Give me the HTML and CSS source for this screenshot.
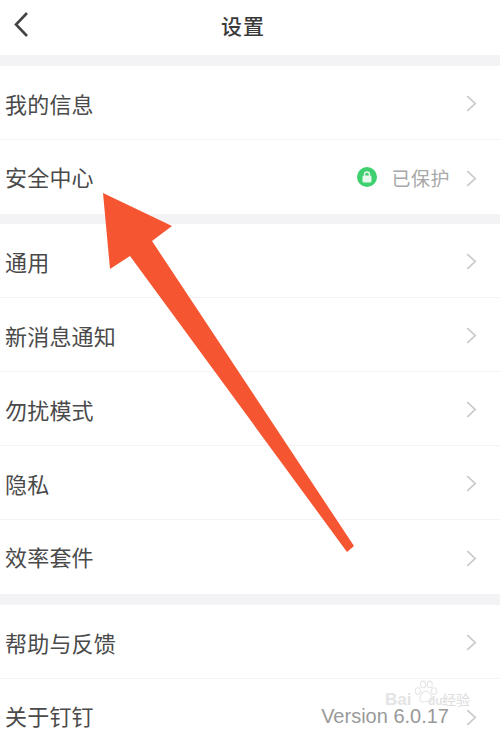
FILE: index.html
```html
<!DOCTYPE html>
<html>
<head>
<meta charset="utf-8">
<link rel="stylesheet" href="styles.css">
<title>设置</title>
</head>
<body>
	<div class="page">
		<div class="header">
			<svg class="back" width="16" height="28" viewBox="0 0 16 28"><path d="M14 2 L3 13.5 L14 25" /></svg>
			<div class="title">设置</div>
		</div>
		<div class="gap"></div>
		<div class="row line"><span class="name">我的信息</span><svg class="chev" width="11" height="17" viewBox="0 0 10 16"><path d="M1 1 L8.5 8 L1 15" /></svg></div>
		<div class="row">
			<span class="name">安全中心</span>
			<svg class="lock" width="20" height="20" viewBox="0 0 20 20">
				<circle cx="10" cy="10" r="10" fill="#3ecf6e" />
				<rect x="5.5" y="8.5" width="9" height="7" rx="1.5" fill="#e8f8ec" />
				<path d="M7.5 9 V7.5 a2.5 2.5 0 0 1 5 0 V9" fill="none" stroke="#e8f8ec" stroke-width="1.4" />
			</svg>
			<span class="value safe">已保护</span>
			<svg class="chev" width="11" height="17" viewBox="0 0 10 16"><path d="M1 1 L8.5 8 L1 15" /></svg>
		</div>
		<div class="gap short"></div>
		<div class="row line"><span class="name">通用</span><svg class="chev" width="11" height="17" viewBox="0 0 10 16"><path d="M1 1 L8.5 8 L1 15" /></svg></div>
		<div class="row line"><span class="name">新消息通知</span><svg class="chev" width="11" height="17" viewBox="0 0 10 16"><path d="M1 1 L8.5 8 L1 15" /></svg></div>
		<div class="row line"><span class="name">勿扰模式</span><svg class="chev" width="11" height="17" viewBox="0 0 10 16"><path d="M1 1 L8.5 8 L1 15" /></svg></div>
		<div class="row line"><span class="name">隐私</span><svg class="chev" width="11" height="17" viewBox="0 0 10 16"><path d="M1 1 L8.5 8 L1 15" /></svg></div>
		<div class="row"><span class="name">效率套件</span><svg class="chev" width="11" height="17" viewBox="0 0 10 16"><path d="M1 1 L8.5 8 L1 15" /></svg></div>
		<div class="gap"></div>
		<div class="row line"><span class="name">帮助与反馈</span><svg class="chev" width="11" height="17" viewBox="0 0 10 16"><path d="M1 1 L8.5 8 L1 15" /></svg></div>
		<div class="row">
			<span class="name">关于钉钉</span>
			<span class="value version">Version 6.0.17</span>
			<svg class="chev" width="11" height="17" viewBox="0 0 10 16"><path d="M1 1 L8.5 8 L1 15" /></svg>
		</div>

		<svg class="arrow" width="500" height="734" viewBox="0 0 500 734">
			<polygon points="103,193 172,226 152,241 354,546 347,552 130,256 110,269" fill="#f65531" />
		</svg>

		<div class="mark">
			<svg class="paw" width="28" height="25" viewBox="0 0 32 34">
				<g fill="none" stroke="#e6e6e6" stroke-width="1.5">
					<ellipse cx="5" cy="15" rx="3.5" ry="4.5" />
					<ellipse cx="12" cy="6" rx="3.5" ry="4.5" />
					<ellipse cx="21" cy="6" rx="3.5" ry="4.5" />
					<ellipse cx="27" cy="15" rx="3.5" ry="4.5" />
					<path d="M16 15 C11 15 7 22 8 27 C9 31 13 30 16 29 C19 30 23 31 24 27 C25 22 21 15 16 15 Z" />
				</g>
			</svg>
			<span class="mark-en">Bai</span><span class="mark-du">du</span><span class="mark-cn">经验</span>
		</div>
	</div>
</body>
</html>
```

FILE: styles.css
```css
html, body {
  margin: 0;
  height: 100%;
  background: #fff;
}

.page {
  position: relative;
  width: 500px;
  height: 734px;
  overflow: hidden;
  background: #fff;
  font-family: "Liberation Sans", "Noto Sans CJK SC", sans-serif;
}

.header {
  position: relative;
  height: 55px;
  box-sizing: border-box;
  padding: 0 14px 6px 0;
  display: flex;
  align-items: center;
  justify-content: center;
}

.back {
  position: absolute;
  left: 13px;
  top: 11px;
}

.back path {
  fill: none;
  stroke: #444;
  stroke-width: 2.6;
}

.title {
  font-size: 21px;
  font-weight: 500;
  color: #3a3a3a;
  letter-spacing: 1px;
}

.gap {
  height: 11px;
  background: #f3f3f6;
}

.gap.short {
  height: 10px;
}

.row {
  height: 74px;
  box-sizing: border-box;
  padding: 0 23px 0 5px;
  display: flex;
  align-items: center;
}

.row.line {
  border-bottom: 1px solid #f3f3f3;
}

.name {
  flex: 1;
  padding-bottom: 2px;
  font-size: 22px;
  letter-spacing: 0.2px;
  color: #4a4a4a;
}

.line .name {
  padding-bottom: 0;
}

.value {
  color: #a8a8a8;
  font-size: 19px;
}

.safe {
  margin: 0 16px 0 14px;
  letter-spacing: 0.5px;
}

.version {
  margin-right: 17px;
  font-size: 20px;
  line-height: 17px;
  color: #9a9a9a;
}

.chev {
  flex: none;
  margin-top: 2px;
}

.chev path {
  fill: none;
  stroke: #c9c9c9;
  stroke-width: 1.6;
}

.arrow {
  position: absolute;
  left: 0;
  top: 0;
}

/* watermark, bottom right */
.mark {
  position: absolute;
  left: 384px;
  top: 678px;
  width: 116px;
  height: 30px;
  color: #e4e4e4;
}

.paw {
  position: absolute;
  left: 28px;
  top: 2px;
}

.mark-en {
  position: absolute;
  left: 1px;
  top: 15px;
  font-size: 17px;
  line-height: 13px;
  font-weight: 700;
}

.mark-du {
  position: absolute;
  left: 44px;
  top: 18px;
  font-size: 12px;
  line-height: 10px;
  font-weight: 700;
}

.mark-cn {
  position: absolute;
  left: 58px;
  top: 16px;
  font-size: 14px;
  line-height: 12px;
  color: #dcdcdc;
}
```
